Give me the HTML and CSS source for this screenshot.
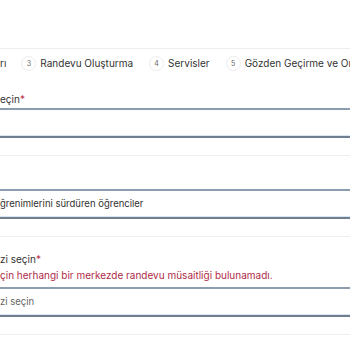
FILE: index.html
```html
<!DOCTYPE html>
<html lang="tr">
<head>
<meta charset="utf-8">
<link rel="stylesheet" href="styles.css">
</head>
<body>
<div class="page">
  <div class="header"></div>
  <nav class="stepper">
    <span class="step-label first">rı</span>
    <span class="step"><span class="num">3</span><span class="step-label">Randevu Oluşturma</span></span>
    <span class="step"><span class="num">4</span><span class="step-label">Servisler</span></span>
    <span class="step"><span class="num">5</span><span class="step-label">Gözden Geçirme ve Onay</span></span>
  </nav>
  <section class="group g1">
    <label class="label">eçin<span class="req">*</span></label>
    <div class="field"></div>
  </section>
  <div class="sep"></div>
  <section class="group g2">
    <div class="field filled">ğrenimlerini sürdüren öğrenciler</div>
  </section>
  <div class="sep"></div>
  <section class="group g3">
    <label class="label">zi seçin<span class="req">*</span></label>
    <p class="error">çin herhangi bir merkezde randevu müsaitliği bulunamadı.</p>
    <div class="field placeholder">zi seçin</div>
  </section>
  <div class="sep"></div>
</div>
</body>
</html>
```

FILE: styles.css
```css
html, body {
  margin: 0;
  padding: 0;
  background: #ffffff;
  overflow: hidden;
}
body {
  font-family: Inter, "Noto Sans", sans-serif;
  color: #333;
  width: 350px;
  height: 350px;
}
.page {
  width: 600px;
}
.header {
  height: 48px;
  border-bottom: 1px solid #eeeeee;
}
.stepper {
  display: flex;
  align-items: center;
  height: 28px;
  font-size: 10px;
  color: #333;
  white-space: nowrap;
}
.step-label.first {
  margin-right: 15px;
}
.step {
  display: flex;
  align-items: center;
  margin-right: 16px;
}
.num {
  width: 15px;
  height: 15px;
  box-sizing: border-box;
  border: 1px solid #ececec;
  border-radius: 50%;
  display: flex;
  align-items: center;
  justify-content: center;
  font-size: 7px;
  color: #666;
  margin-right: 4px;
}
.group {
  display: flex;
  flex-direction: column;
}
.g1 {
  padding-top: 16px;
}
.g2 {
  padding-top: 33px;
}
.g3 {
  padding-top: 16px;
}
.label {
  font-size: 10px;
  line-height: 13px;
  color: #333;
  margin-bottom: 2px;
}
.req {
  color: #c0304a;
}
.error {
  margin: 1px 0 5px;
  font-size: 10px;
  line-height: 13px;
  color: #b02a48;
}
.field {
  height: 26px;
  box-sizing: content-box;
  border-top: 2px solid #8d9db0;
  border-bottom: 2px solid #6f7f90;
  box-shadow: inset 0 -1px 0 #dbe6f3;
  font-size: 9.5px;
  line-height: 25px;
  color: #333;
}
.placeholder {
  color: #666;
}
.sep {
  height: 17px;
  border-bottom: 1px solid #efefef;
}
```
